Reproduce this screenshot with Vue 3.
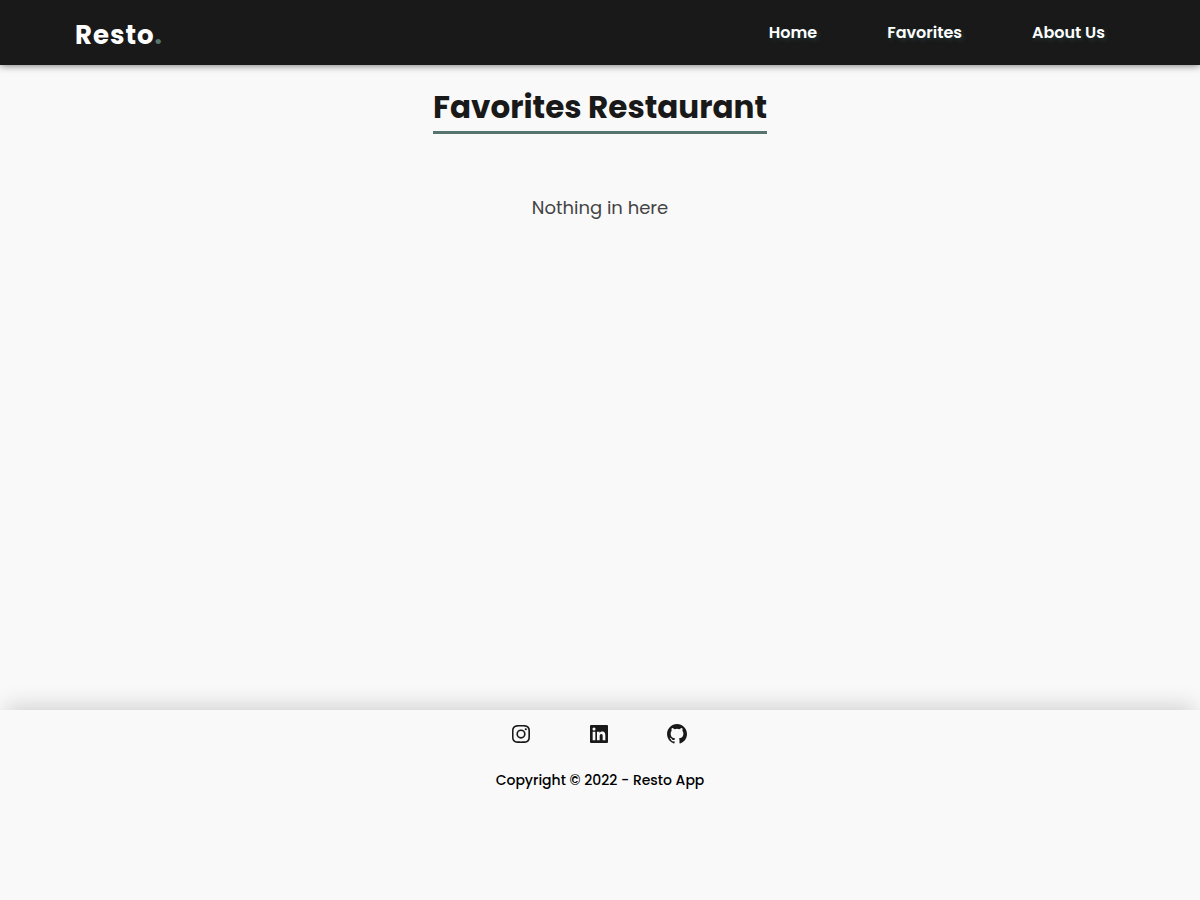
<script setup>
const links = [
  { label: 'Home', href: '#/home' },
  { label: 'Favorites', href: '#/favorites' },
  { label: 'About Us', href: '#/about' },
]
</script>

<template>
  <div class="page">
    <header class="bar">
      <a class="logo" href="#/home">Resto<span class="dot">.</span></a>
      <nav aria-label="Main">
        <ul class="menu">
          <li v-for="link in links" :key="link.label">
            <a :href="link.href">{{ link.label }}</a>
          </li>
        </ul>
      </nav>
    </header>

    <main class="content">
      <h1 class="title">Favorites Restaurant</h1>
      <p class="empty">Nothing in here</p>
    </main>

    <footer class="footer">
      <div class="social">
        <a href="#instagram" aria-label="Instagram">
          <svg viewBox="0 0 24 24" aria-hidden="true">
            <path d="M11.999 7.377a4.623 4.623 0 1 0 0 9.248 4.623 4.623 0 0 0 0-9.248zm0 7.627a3.004 3.004 0 1 1 0-6.008 3.004 3.004 0 0 1 0 6.008z" />
            <circle cx="16.806" cy="7.207" r="1.078" />
            <path d="M20.533 6.111A4.605 4.605 0 0 0 17.9 3.479a6.606 6.606 0 0 0-2.186-.42c-.963-.042-1.268-.054-3.71-.054s-2.755 0-3.71.054a6.554 6.554 0 0 0-2.184.42 4.6 4.6 0 0 0-2.633 2.632 6.585 6.585 0 0 0-.419 2.186c-.043.962-.056 1.267-.056 3.71 0 2.442 0 2.753.056 3.71.015.748.156 1.486.419 2.187a4.61 4.61 0 0 0 2.634 2.632 6.584 6.584 0 0 0 2.185.45c.963.042 1.268.055 3.71.055s2.755 0 3.71-.055a6.615 6.615 0 0 0 2.186-.419 4.613 4.613 0 0 0 2.633-2.633c.263-.7.404-1.438.419-2.186.043-.962.056-1.267.056-3.71s0-2.753-.056-3.71a6.581 6.581 0 0 0-.421-2.217zm-1.218 9.532a5.043 5.043 0 0 1-.311 1.688 2.987 2.987 0 0 1-1.712 1.711 4.985 4.985 0 0 1-1.67.311c-.95.044-1.218.055-3.654.055-2.438 0-2.687 0-3.655-.055a4.96 4.96 0 0 1-1.669-.311 2.985 2.985 0 0 1-1.719-1.711 5.08 5.08 0 0 1-.311-1.669c-.043-.95-.053-1.218-.053-3.654 0-2.437 0-2.686.053-3.655a5.038 5.038 0 0 1 .311-1.687c.305-.789.93-1.41 1.719-1.712a5.01 5.01 0 0 1 1.669-.311c.951-.043 1.218-.055 3.655-.055s2.687 0 3.654.055a4.96 4.96 0 0 1 1.67.311 2.991 2.991 0 0 1 1.712 1.712 5.08 5.08 0 0 1 .311 1.669c.043.951.055 1.218.055 3.655 0 2.436 0 2.698-.043 3.654h-.011z" />
          </svg>
        </a>
        <a href="#linkedin" aria-label="LinkedIn">
          <svg viewBox="0 0 24 24" aria-hidden="true">
            <path d="M20 3H4a1 1 0 0 0-1 1v16a1 1 0 0 0 1 1h16a1 1 0 0 0 1-1V4a1 1 0 0 0-1-1zM8.339 18.337H5.667v-8.59h2.672v8.59zM7.003 8.574a1.548 1.548 0 1 1 0-3.096 1.548 1.548 0 0 1 0 3.096zm11.335 9.763h-2.669V14.16c0-.996-.018-2.277-1.388-2.277-1.39 0-1.601 1.086-1.601 2.207v4.248h-2.667v-8.59h2.56v1.174h.037c.355-.675 1.227-1.387 2.524-1.387 2.704 0 3.203 1.778 3.203 4.092v4.71z" />
          </svg>
        </a>
        <a href="#github" aria-label="GitHub">
          <svg viewBox="0 0 24 24" aria-hidden="true">
            <path fill-rule="evenodd" d="M12.026 2c-5.509 0-9.974 4.465-9.974 9.974 0 4.406 2.857 8.145 6.821 9.465.499.09.679-.217.679-.481 0-.237-.008-.865-.011-1.696-2.775.602-3.361-1.338-3.361-1.338-.452-1.152-1.107-1.459-1.107-1.459-.905-.619.069-.605.069-.605 1.002.07 1.527 1.028 1.527 1.028.89 1.524 2.336 1.084 2.902.829.091-.645.351-1.085.635-1.334-2.214-.251-4.542-1.107-4.542-4.93 0-1.087.389-1.979 1.024-2.675-.101-.253-.446-1.268.099-2.64 0 0 .837-.269 2.742 1.021a9.582 9.582 0 0 1 2.496-.336 9.554 9.554 0 0 1 2.496.336c1.906-1.291 2.742-1.021 2.742-1.021.545 1.372.203 2.387.099 2.64.64.696 1.024 1.587 1.024 2.675 0 3.833-2.33 4.675-4.552 4.922.355.308.675.916.675 1.846 0 1.334-.012 2.41-.012 2.737 0 .267.178.577.687.479C19.146 20.115 22 16.379 22 11.974 22 6.465 17.535 2 12.026 2z" />
          </svg>
        </a>
      </div>
      <p class="copyright">Copyright © 2022 - Resto App</p>
    </footer>
  </div>
</template>

<style>
body {
  margin: 0;
  background: #f9f9f9;
}
</style>

<style scoped>
.page {
  font-family: Poppins, Inter, "Liberation Sans", sans-serif;
  color: #191919;
}

a {
  color: inherit;
  text-decoration: none;
}

.bar {
  display: flex;
  align-items: center;
  justify-content: space-between;
  height: 65px;
  padding: 0 95px 0 75px;
  background: #191919;
  color: #fff;
  box-shadow: 0 0 8px rgba(0, 0, 0, 0.6);
}

.logo {
  padding-top: 4px;
  font-size: 26px;
  font-weight: 700;
  line-height: 40px;
  letter-spacing: 1px;
}

.dot {
  color: #56756e;
}

.menu {
  display: flex;
  gap: 70px;
  margin: 0;
  padding: 0;
  list-style: none;
  font-size: 16px;
  font-weight: 600;
  line-height: 24px;
  text-shadow: 2px 2px 4px #24393a;
}

.content {
  display: flex;
  flex-direction: column;
  align-items: center;
  min-height: 645px;
  padding-top: 18px;
  box-sizing: border-box;
}

.title {
  margin: 0;
  border-bottom: 3px solid #56756e;
  font-size: 31px;
  font-weight: 700;
  line-height: 48px;
}

.empty {
  margin: 60px 0 0;
  color: #444;
  font-size: 18px;
  line-height: 27px;
}

.footer {
  display: flex;
  flex-direction: column;
  align-items: center;
  padding-top: 12px;
  box-shadow: 0 -10px 20px -5px rgba(0, 0, 0, 0.15);
}

.social {
  display: flex;
  gap: 54px;
  padding-right: 2px;
}

.social svg {
  display: block;
  width: 24px;
  height: 24px;
  fill: currentColor;
}

.copyright {
  margin: 22px 0 0;
  color: #000;
  font-size: 14px;
  font-weight: 500;
  line-height: 24px;
}
</style>
